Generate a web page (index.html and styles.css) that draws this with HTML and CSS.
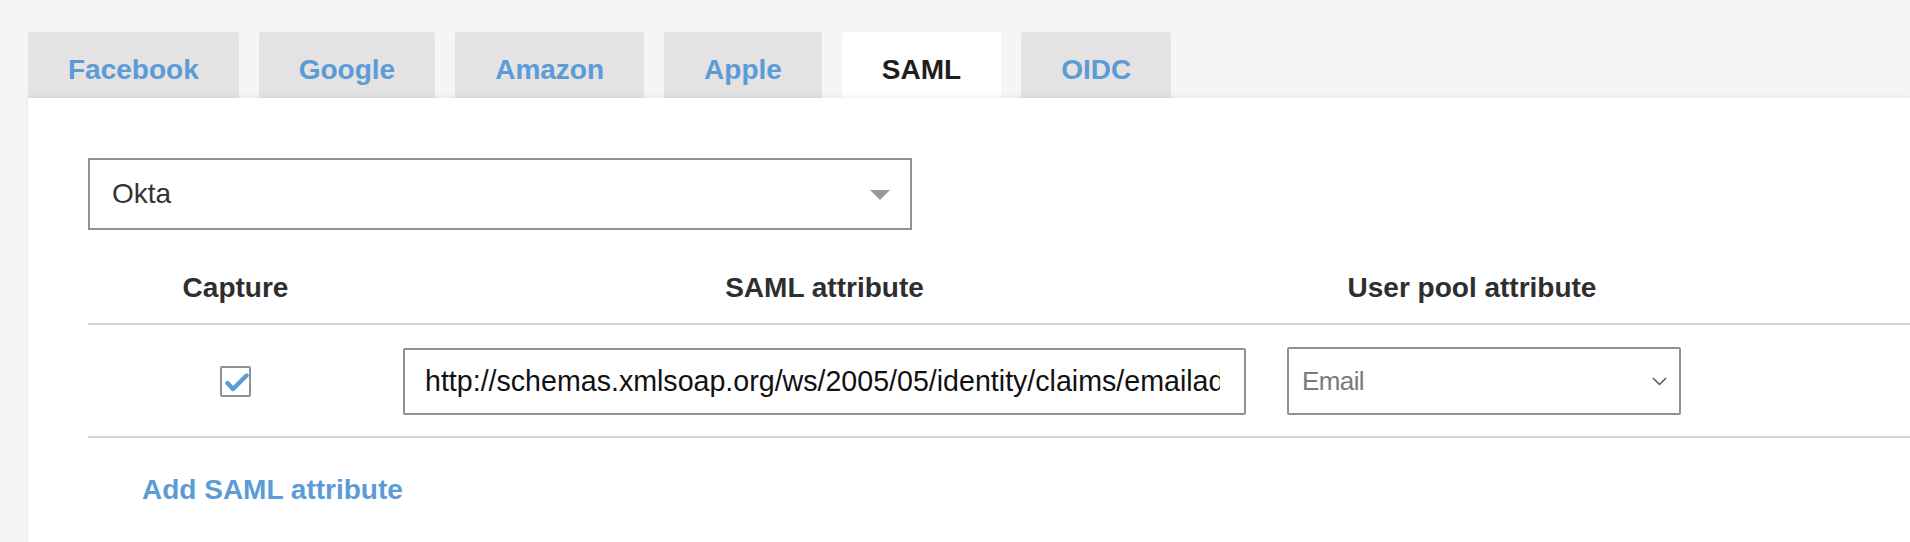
FILE: index.html
```html
<!DOCTYPE html>
<html lang="en">
<head>
<meta charset="utf-8">
<title>Identity providers</title>
<link rel="stylesheet" href="styles.css">
</head>
<body>
<div class="page">
  <nav class="tabs">
    <div class="tab">Facebook</div>
    <div class="tab">Google</div>
    <div class="tab">Amazon</div>
    <div class="tab">Apple</div>
    <div class="tab active">SAML</div>
    <div class="tab">OIDC</div>
  </nav>
  <section class="panel">
    <div class="provider-select">
      <span class="provider-value">Okta</span>
      <svg class="caret" width="20" height="10" viewBox="0 0 20 10"><polygon points="0,0 20,0 10,10" fill="#999"/></svg>
    </div>
    <div class="table">
      <div class="trow thead">
        <div class="cell c-capture">Capture</div>
        <div class="cell c-saml">SAML attribute</div>
        <div class="cell c-pool">User pool attribute</div>
        <div class="cell"></div>
      </div>
      <div class="trow tbody">
        <div class="cell c-capture">
          <span class="checkbox">
            <svg width="27" height="27" viewBox="0 0 27 27"><polyline points="5.5,15 11,21 24.5,7.5" fill="none" stroke="#5b9bd6" stroke-width="4.4" stroke-linecap="round" stroke-linejoin="round"/></svg>
          </span>
        </div>
        <div class="cell c-saml">
          <div class="text-field">
            <input class="text-input" type="text" readonly value="http://schemas.xmlsoap.org/ws/2005/05/identity/claims/emailaddress">
          </div>
        </div>
        <div class="cell c-pool">
          <div class="attr-select">
            <span class="attr-value">Email</span>
            <svg width="15" height="9" viewBox="0 0 15 9"><polyline points="1,1 7.5,7.5 14,1" fill="none" stroke="#555" stroke-width="1.5"/></svg>
          </div>
        </div>
        <div class="cell"></div>
      </div>
    </div>
    <a class="add-link">Add SAML attribute</a>
  </section>
</div>
</body>
</html>
```

FILE: styles.css
```css
html, body {
  margin: 0;
  padding: 0;
}
body {
  background: #f4f5f4;
  font-family: "Liberation Sans", Arial, Helvetica, sans-serif;
  color: #333;
}
.page {
  padding: 32px 0 0 28px;
}
.tabs {
  display: flex;
  gap: 20px;
}
.tab {
  height: 66px;
  box-sizing: border-box;
  padding: 10px 40px 0;
  display: flex;
  align-items: center;
  background: #e4e2e3;
  border-radius: 3px 3px 0 0;
  font-size: 28px;
  line-height: 32px;
  font-weight: bold;
  color: #5b9bd6;
}
.tab.active {
  background: #fff;
  color: #1e1e1e;
}
.panel {
  position: relative;
  z-index: 1;
  background: #fff;
  box-shadow: 0 -1px 4px rgba(0, 0, 0, 0.07);
  padding: 60px 0 0 60px;
  height: 444px;
  box-sizing: border-box;
}
.provider-select {
  width: 824px;
  height: 72px;
  box-sizing: border-box;
  border: 2px solid #909498;
  padding: 0 20px 0 22px;
  display: flex;
  align-items: center;
  justify-content: space-between;
}
.provider-value {
  font-size: 28px;
  color: #333;
}
.caret {
  display: block;
  margin-top: 2px;
}
.table {
  margin-top: 42px;
}
.trow {
  display: grid;
  grid-template-columns: 295px 883px 412px 1fr;
  border-bottom: 2px solid #d4d4d4;
}
.thead .cell {
  font-size: 28px;
  line-height: 32px;
  font-weight: bold;
  color: #2e2e2e;
  text-align: center;
  padding-bottom: 19px;
}
.tbody {
  padding: 22px 0 21px;
  align-items: center;
}
.tbody .c-capture {
  display: flex;
  justify-content: center;
}
.checkbox {
  width: 31px;
  height: 31px;
  box-sizing: border-box;
  border: 2px solid #8c9196;
  border-radius: 2px;
  display: flex;
  align-items: center;
  justify-content: center;
  background: #fff;
}
.checkbox svg {
  display: block;
}
.tbody .c-saml {
  padding: 0 20px;
}
.text-field {
  height: 67px;
  box-sizing: border-box;
  border: 2px solid #8e9296;
  border-radius: 2px;
  padding: 0 24px 0 20px;
  display: flex;
  align-items: center;
  background: #fff;
}
.text-input {
  display: block;
  width: 100%;
  height: 40px;
  margin: 0;
  padding: 0;
  border: none;
  font-family: "Liberation Sans", Arial, Helvetica, sans-serif;
  font-size: 28.6px;
  color: #111;
  background: transparent;
  outline: none;
}
.attr-select {
  margin-left: 21px;
  width: 394px;
  height: 68px;
  box-sizing: border-box;
  border: 2px solid #8e9296;
  border-radius: 2px;
  padding: 0 12px 0 13px;
  display: flex;
  align-items: center;
  justify-content: space-between;
}
.attr-value {
  font-size: 26px;
  letter-spacing: -0.6px;
  color: #7a7a7a;
}
.attr-select svg {
  display: block;
}
.add-link {
  display: inline-block;
  margin: 36px 0 0 54px;
  font-size: 28px;
  line-height: 32px;
  font-weight: bold;
  color: #5b9bd6;
  cursor: pointer;
}
```
